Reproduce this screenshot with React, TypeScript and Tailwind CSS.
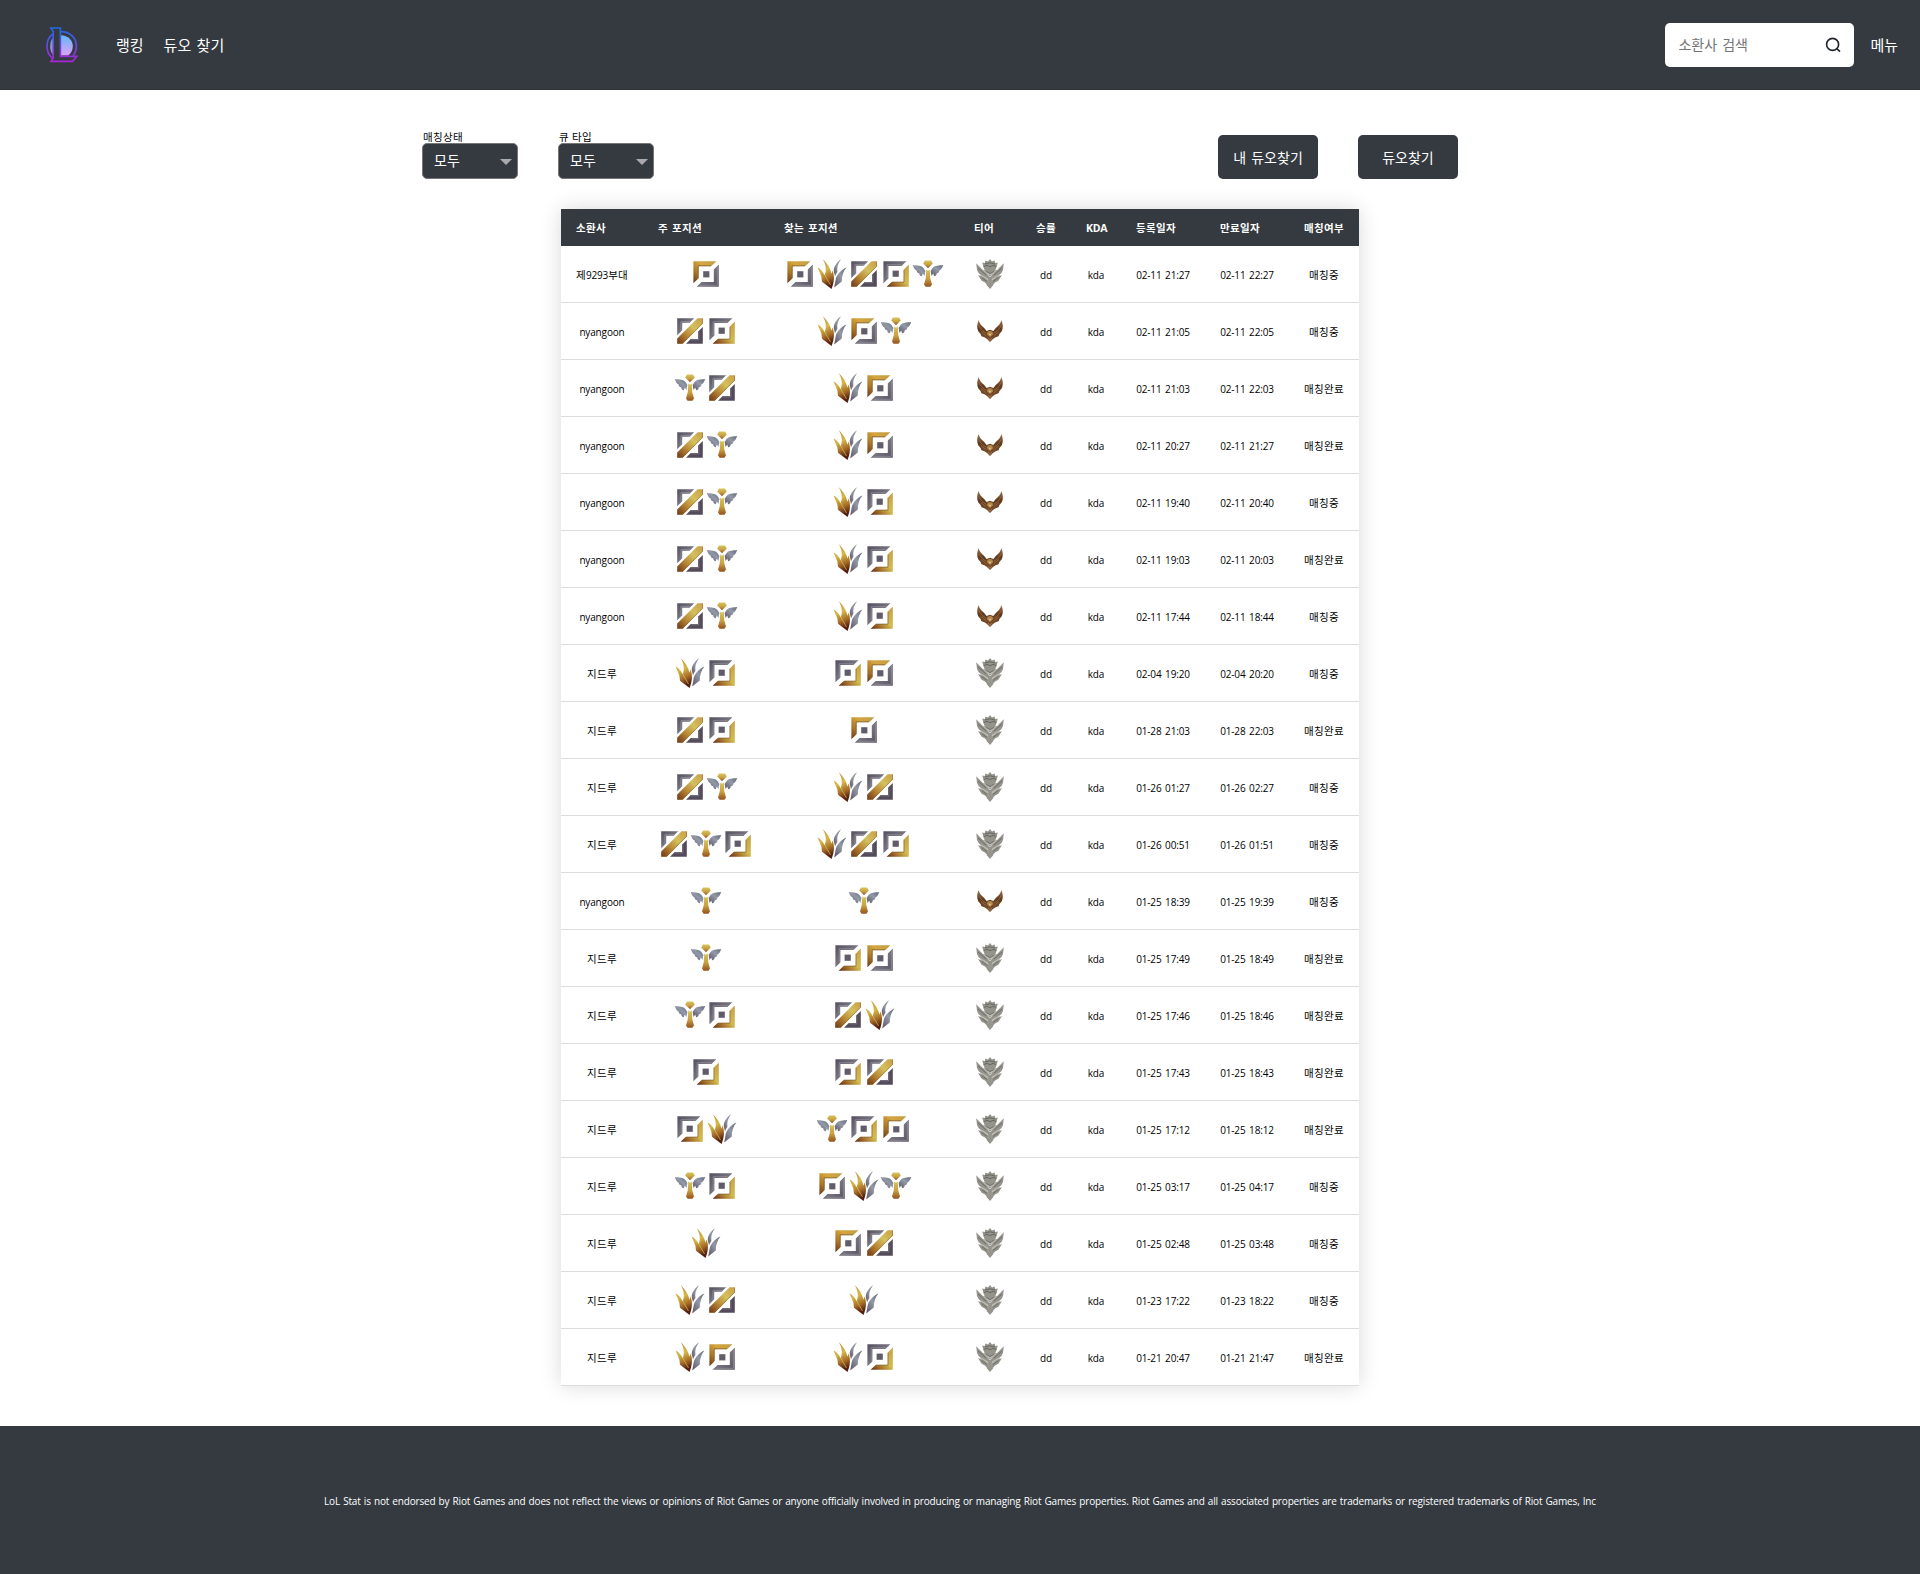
import React from "react";

type Pos = "T" | "J" | "M" | "B" | "S";
type Tier = "silver" | "bronze";

const rows: [string, string, string, Tier, string, string, boolean][] = [
  ["제9293부대", "T", "TJMBS", "silver", "02-11 21:27", "02-11 22:27", false],
  ["nyangoon", "MB", "JTS", "bronze", "02-11 21:05", "02-11 22:05", false],
  ["nyangoon", "SM", "JT", "bronze", "02-11 21:03", "02-11 22:03", true],
  ["nyangoon", "MS", "JT", "bronze", "02-11 20:27", "02-11 21:27", true],
  ["nyangoon", "MS", "JB", "bronze", "02-11 19:40", "02-11 20:40", false],
  ["nyangoon", "MS", "JB", "bronze", "02-11 19:03", "02-11 20:03", true],
  ["nyangoon", "MS", "JB", "bronze", "02-11 17:44", "02-11 18:44", false],
  ["지드루", "JB", "BT", "silver", "02-04 19:20", "02-04 20:20", false],
  ["지드루", "MB", "T", "silver", "01-28 21:03", "01-28 22:03", true],
  ["지드루", "MS", "JM", "silver", "01-26 01:27", "01-26 02:27", false],
  ["지드루", "MSB", "JMB", "silver", "01-26 00:51", "01-26 01:51", false],
  ["nyangoon", "S", "S", "bronze", "01-25 18:39", "01-25 19:39", false],
  ["지드루", "S", "BT", "silver", "01-25 17:49", "01-25 18:49", true],
  ["지드루", "SB", "MJ", "silver", "01-25 17:46", "01-25 18:46", true],
  ["지드루", "B", "BM", "silver", "01-25 17:43", "01-25 18:43", true],
  ["지드루", "BJ", "SBT", "silver", "01-25 17:12", "01-25 18:12", true],
  ["지드루", "SB", "TJS", "silver", "01-25 03:17", "01-25 04:17", false],
  ["지드루", "J", "TM", "silver", "01-25 02:48", "01-25 03:48", false],
  ["지드루", "JM", "J", "silver", "01-23 17:22", "01-23 18:22", false],
  ["지드루", "JT", "JB", "silver", "01-21 20:47", "01-21 21:47", true],
];

function Gradients() {
  return (
    <svg className="absolute h-0 w-0" aria-hidden="true">
      <defs>
        <linearGradient id="goldTop" gradientUnits="userSpaceOnUse" x1="26" y1="4" x2="4" y2="25">
          <stop offset="0" stopColor="#bf9c48" />
          <stop offset="0.4" stopColor="#d6a63e" />
          <stop offset="0.7" stopColor="#ab7a2a" />
          <stop offset="1" stopColor="#6b3a1a" />
        </linearGradient>
        <linearGradient id="goldBot" gradientUnits="userSpaceOnUse" x1="28" y1="8" x2="7" y2="29">
          <stop offset="0" stopColor="#c6a148" />
          <stop offset="0.45" stopColor="#d3bb4e" />
          <stop offset="0.75" stopColor="#a0692a" />
          <stop offset="1" stopColor="#5c2a14" />
        </linearGradient>
        <linearGradient id="goldMid" gradientUnits="userSpaceOnUse" x1="28" y1="4" x2="4" y2="28">
          <stop offset="0" stopColor="#c9a048" />
          <stop offset="0.35" stopColor="#d4c05e" />
          <stop offset="0.65" stopColor="#b98936" />
          <stop offset="1" stopColor="#743c18" />
        </linearGradient>
        <linearGradient id="goldLeaf" x1="0" y1="0" x2="0.25" y2="1">
          <stop offset="0" stopColor="#b58a35" />
          <stop offset="0.45" stopColor="#d6b848" />
          <stop offset="0.75" stopColor="#a66c2a" />
          <stop offset="1" stopColor="#541f10" />
        </linearGradient>
        <linearGradient id="goldBody" x1="0" y1="0" x2="0" y2="1">
          <stop offset="0" stopColor="#d8c55c" />
          <stop offset="0.55" stopColor="#c79d42" />
          <stop offset="1" stopColor="#94501f" />
        </linearGradient>
        <linearGradient id="steel" x1="0" y1="0" x2="1" y2="1">
          <stop offset="0" stopColor="#55505f" />
          <stop offset="0.5" stopColor="#777480" />
          <stop offset="1" stopColor="#5c5563" />
        </linearGradient>
        <linearGradient id="steelLeaf" x1="1" y1="0" x2="0" y2="1">
          <stop offset="0" stopColor="#666b78" />
          <stop offset="0.45" stopColor="#9299a8" />
          <stop offset="1" stopColor="#5c5263" />
        </linearGradient>
        <linearGradient id="bronzeWing" x1="0" y1="0" x2="0" y2="1">
          <stop offset="0" stopColor="#a87550" />
          <stop offset="0.4" stopColor="#5f3a1e" />
          <stop offset="1" stopColor="#7d5030" />
        </linearGradient>
      </defs>
    </svg>
  );
}

function PositionIcon({ kind }: { kind: Pos }) {
  return (
    <svg className="block h-8 w-8 shrink-0" viewBox="0 0 32 32">
      {kind === "T" && (
        <>
          <path d="M3.4 3.2H26.4L21.4 8H8.4V20.6L3.4 25.2Z" fill="url(#goldTop)" />
          <path d="M8.2 20V7.9H21" fill="none" stroke="#6e4d24" strokeWidth="0.7" />
          <path d="M28.8 6.4V28.8H6.6L11.6 24H23.8V11.4Z" fill="url(#steel)" />
          <path d="M27.4 9V27.3H10" fill="none" stroke="#94929c" strokeWidth="0.7" />
          <path d="M13.2 13.2H19.4V19.4H13.2Z" fill="#615d6a" />
        </>
      )}
      {kind === "B" && (
        <>
          <path d="M3.4 3.2H26.4L21.4 8H8.4V20.6L3.4 25.2Z" fill="url(#steel)" />
          <path d="M7.2 20.5V6.8H21.5" fill="none" stroke="#9a98a2" strokeWidth="0.7" />
          <path d="M28.8 6.4V28.8H6.6L11.6 24H23.8V11.4Z" fill="url(#goldBot)" />
          <path d="M24 11.8V24.1H12" fill="none" stroke="#7d5c28" strokeWidth="0.7" />
          <path d="M12.6 12.6H18.8V18.8H12.6Z" fill="#5f5b68" />
        </>
      )}
      {kind === "M" && (
        <>
          <path d="M3.2 3.2H20.2L15.6 7.8H8.2V15.2L3.2 20.2Z" fill="url(#steel)" />
          <path d="M7 15.6V6.7H16" fill="none" stroke="#9a98a2" strokeWidth="0.7" />
          <path d="M28.8 12V28.8H12L16.8 24H24V16.8Z" fill="#544c5a" />
          <path d="M24.8 17V24.8H17.2" fill="none" stroke="#8a8792" strokeWidth="0.7" />
          <path d="M23.6 3.2H28.8V8.6L8.8 28.8H3.2V23.6Z" fill="url(#goldMid)" />
          <path d="M28.5 3.5L28.5 8.4L8.6 28.4H3.5" fill="none" stroke="#93672b" strokeWidth="0.6" />
        </>
      )}
      {kind === "J" && (
        <>
          <path d="M6.8 1.2C11 5 14.8 10.5 15.3 15.8L16.6 12.6C18.6 17.5 18.5 24 15.6 31L6 23.8L5.4 18.8L1.6 9.6C4.5 11 6.8 13.4 8.6 17.3C10.8 12.5 10 6.3 6.8 1.2Z" fill="url(#goldLeaf)" />
          <path d="M9 17C10 20 12.5 23 14.5 27" fill="none" stroke="#e3c24f" strokeWidth="1" opacity="0.7" />
          <path d="M25 1.3C19.8 5.2 17.6 9.4 17.8 13.2L19 18.2C19.6 16.7 20.4 15.3 21.4 14C20.8 9.2 22 5.2 25 1.3Z" fill="url(#steelLeaf)" />
          <path d="M30.4 9.4C25.6 11.4 21 16 19.8 20.8L18.2 29.6L25.8 23.4C25.8 18 27.2 13.4 30.4 9.4Z" fill="url(#steelLeaf)" />
        </>
      )}
      {kind === "S" && (
        <>
          <path d="M0.8 6.9C5 7.4 9.4 7 11.6 10.2L13.4 13L12.4 18L10.8 15.4L9.8 18.2C8.2 18 7.4 17 7.2 15.2C5.6 15 4.8 14.2 4.6 12.4C2.8 11.6 1.6 9.4 0.8 6.9Z" fill="url(#steelLeaf)" />
          <path d="M31.2 6.9C27 7.4 22.6 7 20.4 10.2L18.6 13L19.6 18L21.2 15.4L22.2 18.2C23.8 18 24.6 17 24.8 15.2C26.4 15 27.2 14.2 27.4 12.4C29.2 11.6 30.4 9.4 31.2 6.9Z" fill="url(#steelLeaf)" />
          <path d="M13 2.6H19L20.8 5.4L16 10.2L11.2 5.4Z" fill="url(#goldBody)" />
          <path d="M14.2 11.6L16 12.8L17.8 11.6L18.2 20L20 26.6L18.4 28.7H13.6L12 26.6L13.8 20Z" fill="url(#goldBody)" />
        </>
      )}
    </svg>
  );
}

function TierIcon({ tier }: { tier: Tier }) {
  if (tier === "silver") {
    return (
      <svg className="mx-auto block h-8 w-8" viewBox="0 0 32 32">
        <path d="M7 12H25L26 17L22 23L18 28H14L10 23L6 17Z" fill="#bdbdb6" />
        <g fill="#94948c">
          <path d="M16 1L18 3.6L20.6 2.4L21.2 5L23.8 4.6L22.4 9.4L21 13L16 16L11 13L9.6 9.4L8.2 4.6L10.8 5L11.4 2.4L14 3.6Z" />
          <path d="M2.2 5.2L5.4 8.4L9.6 12.8L14.4 17.6L14.6 21L9 17.6L4.8 15.4L3 12Z" />
          <path d="M29.8 5.2L26.6 8.4L22.4 12.8L17.6 17.6L17.4 21L23 17.6L27.2 15.4L29 12Z" />
          <path d="M4 17L9.4 19L14.4 23V28L11 24.4L7.6 22.8Z" />
          <path d="M28 17L22.6 19L17.6 23V28L21 24.4L24.4 22.8Z" />
          <path d="M16 16.4L18 19L17.6 25L19.4 27L16 31L12.6 27L14.4 25L14 19Z" />
        </g>
        <path d="M11 6L16 4.8L21 6M9.8 8.5L13 7.4L16 8.6L19 7.4L22.2 8.5" fill="none" stroke="#62625b" strokeWidth="0.9" />
        <path d="M4 10L12 17M28 10L20 17M12 13.4L16 15.6L20 13.4M7.6 19.6L13 23.4M24.4 19.6L19 23.4" fill="none" stroke="#66665f" strokeWidth="0.8" />
        <path d="M14.6 17.4L16 19L17.4 17.4" fill="none" stroke="#d6d6cf" strokeWidth="0.9" />
      </svg>
    );
  }
  return (
    <svg className="mx-auto block h-8 w-8" viewBox="0 0 32 32">
      <path d="M4.6 5C5.2 8.2 7.6 11 10.2 13L12.6 16L16 14.8L19.4 16L21.8 13C24.4 11 26.8 8.2 27.4 5C29 9 29.4 12.6 27.8 16.2L25.4 19L24.6 21.2L21.6 22.2L19 24L16 27L13 24L10.4 22.2L7.4 21.2L6.6 19L4.2 16.2C2.6 12.6 3 9 4.6 5Z" fill="url(#bronzeWing)" />
      <path d="M4.8 10.5C6.4 14 9 16.6 12.4 18.4M27.2 10.5C25.6 14 23 16.6 19.6 18.4M7 16.6L12.5 21M25 16.6L19.5 21" fill="none" stroke="#a37445" strokeWidth="0.7" />
      <path d="M13.4 16.8L16 15.8L18.6 16.8L19 19.4L16 22L13 19.4Z" fill="#b0854a" />
      <path d="M14.4 18L16 19.2L17.6 18L16 21Z" fill="#ecd596" />
      <path d="M14.2 22.8L16 25.6L17.8 22.8" fill="none" stroke="#a97c4c" strokeWidth="0.8" />
    </svg>
  );
}

function Logo() {
  return (
    <svg className="block h-9 w-8" viewBox="0 0 32 36">
      <defs>
        <linearGradient id="logoLine" gradientUnits="userSpaceOnUse" x1="0" y1="0" x2="0" y2="36">
          <stop offset="0" stopColor="#1f6be6" />
          <stop offset="0.45" stopColor="#5a4ee0" />
          <stop offset="1" stopColor="#b321d6" />
        </linearGradient>
        <linearGradient id="logoFill" gradientUnits="userSpaceOnUse" x1="0" y1="8" x2="0" y2="30">
          <stop offset="0" stopColor="#62b8ff" />
          <stop offset="1" stopColor="#e6a0f4" />
        </linearGradient>
      </defs>
      <path d="M15 8.2C22 8.4 26.8 13.2 26.8 19.2C26.8 23 25 26.5 22.2 28.6H15Z" fill="url(#logoFill)" />
      <path d="M7 10.5C3.2 14.5 3.2 24 7 27.8Z" fill="url(#logoFill)" opacity="0.8" />
      <path d="M15 4.7C24 4.7 30.4 11.2 30.4 19.2C30.4 22.8 29.2 26 27.2 28.6M7 7C-1 12.5-1 26 7 31.3" fill="none" stroke="url(#logoLine)" strokeWidth="1.7" />
      <path d="M4.8 1H14.4V29.4H30.6L26.6 34.4H5L7.2 31V4.6Z" fill="#343a40" stroke="url(#logoLine)" strokeWidth="1.6" />
    </svg>
  );
}

function Select({ label }: { label: string }) {
  return (
    <div className="w-24">
      <div className="h-[13px] pl-px text-[10.5px] leading-[14px] tracking-[0.3px] whitespace-nowrap text-black">{label}</div>
      <button className="flex h-9 w-24 items-center justify-between rounded-[5px] border border-[#767676] bg-[#343a40] pr-[5px] pl-[11px] text-[14px] leading-none text-white">
        <span>모두</span>
        <svg className="mt-px h-[6px] w-3" viewBox="0 0 12 6">
          <path d="M0 0H12L6 6Z" fill="#aaa9ad" />
        </svg>
      </button>
    </div>
  );
}

const heads = ["소환사", "주 포지션", "찾는 포지션", "티어", "승률", "KDA", "등록일자", "만료일자", "매칭여부"];
const latin = "text-[10px] tracking-[-0.15px] [word-spacing:1.2px]";
const cell = "border-b border-[#dddddd] p-0";
const textCell = "border-b border-[#dddddd] p-0 pt-px";

function Icons({ list }: { list: string }) {
  return (
    <div className="flex justify-center">
      {list.split("").map((k, i) => (
        <PositionIcon key={i} kind={k as Pos} />
      ))}
    </div>
  );
}

export default function App() {
  return (
    <div className="flex h-[1574px] flex-col overflow-hidden bg-white font-['Open_Sans','Noto_Sans_CJK_KR',sans-serif] text-black">
      <Gradients />
      <header className="flex h-[90px] shrink-0 items-center border-b border-[#2f3338] bg-[#343a40] pr-[22px] pl-[46px] text-[15px] text-white">
        <Logo />
        <nav className="ml-[38px] flex gap-5 pt-[2px]">
          <a>랭킹</a>
          <a className="[word-spacing:1.5px]">듀오 찾기</a>
        </nav>
        <div className="ml-auto flex h-11 w-[189px] items-center justify-between rounded-[5px] bg-white pr-[13px] pl-[13px]">
          <span className="text-[14px] text-[#757575] [word-spacing:1.5px]">소환사 검색</span>
          <svg className="h-4 w-4" viewBox="0 0 16 16" fill="none" stroke="#212529" strokeWidth="1.6">
            <circle cx="7.6" cy="7.4" r="6" />
            <path d="M11.8 11.6L15 14.6" />
          </svg>
        </div>
        <a className="ml-4 pt-[2px]">메뉴</a>
      </header>

      <main>
        <div className="mt-10 flex h-[49px] items-end pl-[422px]">
          <Select label="매칭상태" />
          <div className="w-10" />
          <Select label="큐 타입" />
          <button className="ml-[564px] h-11 w-[100px] rounded-[5px] bg-[#343a40] text-[14px] text-white [word-spacing:1.5px]">내 듀오찾기</button>
          <button className="ml-10 h-11 w-[100px] rounded-[5px] bg-[#343a40] text-[14px] text-white">듀오찾기</button>
        </div>

        <table className="mt-[30px] ml-[561px] w-[798px] table-fixed border-separate border-spacing-0 shadow-[0_0_20px_rgba(0,0,0,0.15)]">
          <colgroup>
            <col className="w-[82px]" />
            <col className="w-[126px]" />
            <col className="w-[190px]" />
            <col className="w-[62px]" />
            <col className="w-[50px]" />
            <col className="w-[50px]" />
            <col className="w-[84px]" />
            <col className="w-[84px]" />
            <col className="w-[70px]" />
          </colgroup>
          <thead>
            <tr className="h-[37px] bg-[#343a40] text-left text-[10.5px] leading-[14px] tracking-[0.3px] text-white [word-spacing:1px]">
              {heads.map((h) => (
                <th key={h} className="p-0 pl-[15px] font-bold whitespace-nowrap">
                  {h === "KDA" ? <span className="text-[10.5px] tracking-[-0.2px]">{h}</span> : h}
                </th>
              ))}
            </tr>
          </thead>
          <tbody>
            {rows.map(([name, main, want, tier, from, to, done], i) => (
              <tr key={i} className="h-[57px] text-center text-[10.5px] leading-[14px] tracking-[0.3px] whitespace-nowrap">
                <td className={textCell}>
                  {name === "nyangoon" ? (
                    <span className={latin}>{name}</span>
                  ) : name.startsWith("제") ? (
                    <>제<span className={latin}>9293</span>부대</>
                  ) : (
                    name
                  )}
                </td>
                <td className={cell}><Icons list={main} /></td>
                <td className={cell}><Icons list={want} /></td>
                <td className={cell}><TierIcon tier={tier} /></td>
                <td className={textCell}><span className={latin}>dd</span></td>
                <td className={textCell}><span className={latin}>kda</span></td>
                <td className={textCell}><span className={latin}>{from}</span></td>
                <td className={textCell}><span className={latin}>{to}</span></td>
                <td className={textCell}>{done ? "매칭완료" : "매칭중"}</td>
              </tr>
            ))}
          </tbody>
        </table>
      </main>

      <footer className="mt-10 flex h-[148px] shrink-0 items-center justify-center bg-[#343a40] pt-[3px] text-[10px] tracking-[-0.16px] whitespace-nowrap text-white [word-spacing:0.7px]">
        LoL Stat is not endorsed by Riot Games and does not reflect the views or opinions of Riot Games or anyone officially involved in producing or managing Riot Games properties. Riot Games and all associated properties are trademarks or registered trademarks of Riot Games, Inc
      </footer>
    </div>
  );
}
